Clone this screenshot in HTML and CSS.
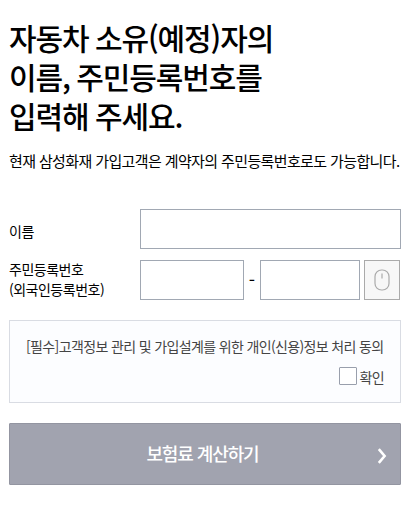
FILE: index.html
```html
<!DOCTYPE html>
<html lang="ko">

<head>
    <meta charset="UTF-8">
    <meta name="viewport" content="width=device-width, initial-scale=1.0">
    <title>보험료 계산</title>
    <link rel="stylesheet" href="styles.css">
</head>

<body>
    <form class="calc">
        <h1 class="title">자동차 소유(예정)자의<br>이름, 주민등록번호를<br>입력해 주세요.</h1>
        <p class="desc">현재 삼성화재 가입고객은 계약자의 주민등록번호로도 가능합니다.</p>
        <div class="row">
            <label class="label nameLabel" for="name">이름</label>
            <input class="input" type="text" id="name">
        </div>
        <div class="row">
            <label class="label juminLabel" for="jumin1">주민등록번호<br>(외국인등록번호)</label>
            <input class="input front" type="text" id="jumin1">
            <span class="dash">-</span>
            <input class="input back" type="password" id="jumin2">
            <button class="mouseBtn" type="button" aria-label="마우스 입력">
                <svg width="16" height="22" viewBox="0 0 16 22" fill="none" stroke="#aaa" stroke-width="1.2">
                    <rect x="1" y="1" width="14" height="20" rx="6.5" />
                    <path d="M8 4.5v5" />
                </svg>
            </button>
        </div>
        <div class="agree">
            <p class="agreeText">[필수]고객정보 관리 및 가입설계를 위한 개인(신용)정보 처리 동의</p>
            <label class="check"><input class="checkbox" type="checkbox"><span class="checkText">확인</span></label>
        </div>
        <button class="submit" type="button">
            <span class="submitText">보험료 계산하기</span>
            <svg class="arrow" width="10" height="16" viewBox="0 0 10 16" fill="none" stroke="#fff" stroke-width="2.6">
                <path d="M1.8 1.2L7.6 8L1.8 14.8" />
            </svg>
        </button>
    </form>
</body>

</html>
```

FILE: styles.css
```css
* {
    margin: 0;
    padding: 0;
    box-sizing: border-box;
}

body {
    background: #fff;
    color: #000;
    font-family: "Noto Sans CJK KR", sans-serif;
    font-size: 14px;
}

.calc {
    width: 410px;
    padding: 18px 9px 0;
}

.title {
    font-size: 30px;
    font-weight: 500;
    line-height: 39px;
    letter-spacing: -1.1px;
    word-spacing: -0.8px;
    white-space: nowrap;
}

.desc {
    margin-top: 16px;
    margin-bottom: 38px;
    font-size: 15px;
    line-height: 20px;
    letter-spacing: -0.62px;
    white-space: nowrap;
}

.row {
    display: flex;
    align-items: center;
    height: 40px;
    margin-bottom: 11px;
}

.label {
    width: 131px;
    line-height: 20px;
    letter-spacing: -0.5px;
}

.nameLabel {
    padding-top: 4px;
}

.juminLabel {
    padding-bottom: 2px;
}

.input {
    width: 261px;
    height: 40px;
    border: 1px solid #a1a8b3;
    background: #fff;
}

.front {
    width: 104px;
}

.dash {
    width: 16px;
    padding-bottom: 3px;
    font-size: 18px;
    text-align: center;
}

.back {
    width: 100px;
}

.mouseBtn {
    display: flex;
    align-items: center;
    justify-content: center;
    width: 36px;
    height: 40px;
    margin-left: 4px;
    border: 1px solid #aaa;
    background: #f7f7f7;
}

.agree {
    width: 392px;
    height: 83px;
    margin-top: 20px;
    padding: 15px 16px 0;
    border: 1px solid #d9dce3;
    background: #fcfdff;
    color: #444;
}

.agreeText {
    line-height: 20px;
    letter-spacing: -0.64px;
    white-space: nowrap;
}

.check {
    display: flex;
    align-items: center;
    justify-content: flex-end;
    gap: 3px;
    height: 20px;
    margin-top: 10px;
    line-height: 20px;
    letter-spacing: -0.64px;
}

.checkText {
    padding-top: 2px;
}

.checkbox {
    appearance: none;
    width: 18px;
    height: 18px;
    border: 1px solid #999fac;
    border-radius: 1px;
    background: #fff;
}

.submit {
    display: flex;
    align-items: center;
    width: 392px;
    height: 62px;
    margin-top: 20px;
    padding-right: 13px;
    border: 1px solid #9395a1;
    border-radius: 1px;
    background: #a1a3af;
    color: #fff;
    font-family: inherit;
    font-size: 18px;
    font-weight: 500;
    letter-spacing: -1.1px;
}

.submitText {
    flex: 1;
    padding-left: 18px;
    padding-bottom: 3px;
}

.arrow {
    margin-top: 4px;
}
```
